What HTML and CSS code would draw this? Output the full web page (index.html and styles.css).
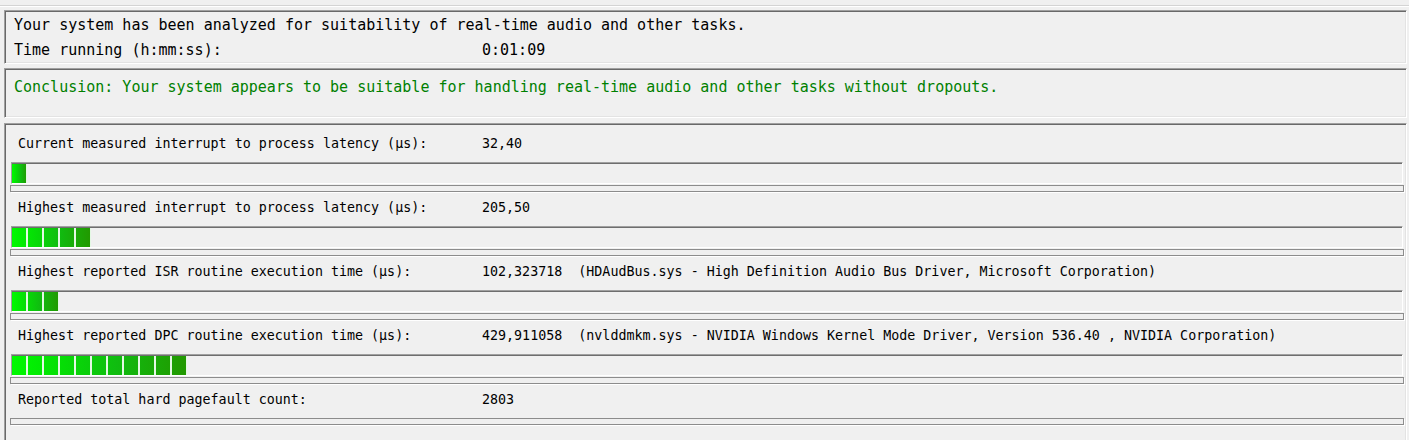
FILE: index.html
```html
<!DOCTYPE html>
<html lang="en">
<head>
<meta charset="utf-8">
<title>LatencyMon - Main</title>
<link rel="stylesheet" href="styles.css">
</head>
<body>
<div class="topline"></div>

<section class="panel panel-info">
  <div class="line">Your system has been analyzed for suitability of real-time audio and other tasks.</div>
  <div class="line kv"><span class="key">Time running (h:mm:ss):</span><span class="val">0:01:09</span></div>
</section>

<section class="panel panel-conclusion">
  <div class="line conclusion">Conclusion: Your system appears to be suitable for handling real-time audio and other tasks without dropouts.</div>
</section>

<section class="panel panel-stats">
  <div class="stat">
    <div class="kv"><span class="key">Current measured interrupt to process latency (µs):</span><span class="val">32,40</span></div>
    <div class="meter"><div class="meter-fill" style="width:15px"></div></div>
    <div class="track"></div>
  </div>
  <div class="stat">
    <div class="kv"><span class="key">Highest measured interrupt to process latency (µs):</span><span class="val">205,50</span></div>
    <div class="meter"><div class="meter-fill" style="width:79px"></div></div>
    <div class="track"></div>
  </div>
  <div class="stat">
    <div class="kv"><span class="key">Highest reported ISR routine execution time (µs):</span><span class="val">102,323718&nbsp;&nbsp;(HDAudBus.sys - High Definition Audio Bus Driver, Microsoft Corporation)</span></div>
    <div class="meter"><div class="meter-fill" style="width:47px"></div></div>
    <div class="track"></div>
  </div>
  <div class="stat">
    <div class="kv"><span class="key">Highest reported DPC routine execution time (µs):</span><span class="val">429,911058&nbsp;&nbsp;(nvlddmkm.sys - NVIDIA Windows Kernel Mode Driver, Version 536.40 , NVIDIA Corporation)</span></div>
    <div class="meter"><div class="meter-fill" style="width:175px"></div></div>
    <div class="track"></div>
  </div>
  <div class="stat stat-last">
    <div class="kv"><span class="key">Reported total hard pagefault count:</span><span class="val">2803</span></div>
    <div class="track track-solo"></div>
  </div>
</section>
</body>
</html>
```

FILE: styles.css
```css
html, body {
  margin: 0;
  padding: 0;
  overflow: hidden;
  background: #f0f0f0;
}

body {
  font-family: "DejaVu Sans Mono", "Liberation Mono", monospace;
  color: #000;
  height: 440px;
}

.topline {
  margin-top: 5px;
  height: 1px;
  background: #d4d4d4;
  border-bottom: 1px solid #ffffff;
}

.panel {
  margin: 3px 2px 0 4px;
  border: 1px solid;
  border-color: #a0a0a0 #ffffff #ffffff #a0a0a0;
  box-shadow: inset 1px 1px 0 #696969, inset -1px -1px 0 #e3e3e3;
  background: #f0f0f0;
}

.panel-info {
  padding: 2px 0 0 9px;
  font-size: 15px;
}

.panel-conclusion {
  margin-top: 4px;
  padding: 6px 0 17px 9px;
  font-size: 15px;
}

.panel-stats {
  margin-top: 5px;
  padding: 10px 0 40px 0;
  font-size: 13.33px;
}

.line {
  line-height: 25px;
  height: 25px;
  white-space: pre;
}

.conclusion {
  color: #008000;
}

.kv {
  display: flex;
  white-space: pre;
}

.panel-info .key {
  width: 468px;
  flex: none;
}

.panel-stats .kv {
  padding-left: 13px;
  line-height: 20px;
  height: 20px;
}

.panel-stats .key {
  width: 464px;
  flex: none;
}

.stat {
  margin-bottom: 6px;
}

.meter {
  box-sizing: border-box;
  height: 22px;
  margin: 8px 3px 0 6px;
  padding-top: 1px;
  border: 1px solid;
  border-color: #a0a0a0 #ffffff #ffffff #a0a0a0;
  box-shadow: inset 0 1px 0 #6e6e6e;
  background: #f0f0f0;
}

.meter-fill {
  height: 100%;
  background:
    repeating-linear-gradient(to right, transparent 0 14.5px, #e4f8e4 14.5px 16px),
    linear-gradient(to right, #00fa00, #06dc06 30%, #10bc10 60%, #229800);
}

.track {
  box-sizing: border-box;
  height: 7px;
  margin: 1px 2px 0 5px;
  border: 1px solid #8c8c8c;
  background: #efefef;
  box-shadow: 1px 1px 0 #ffffff;
}

.track-solo {
  margin-top: 8px;
}
```
